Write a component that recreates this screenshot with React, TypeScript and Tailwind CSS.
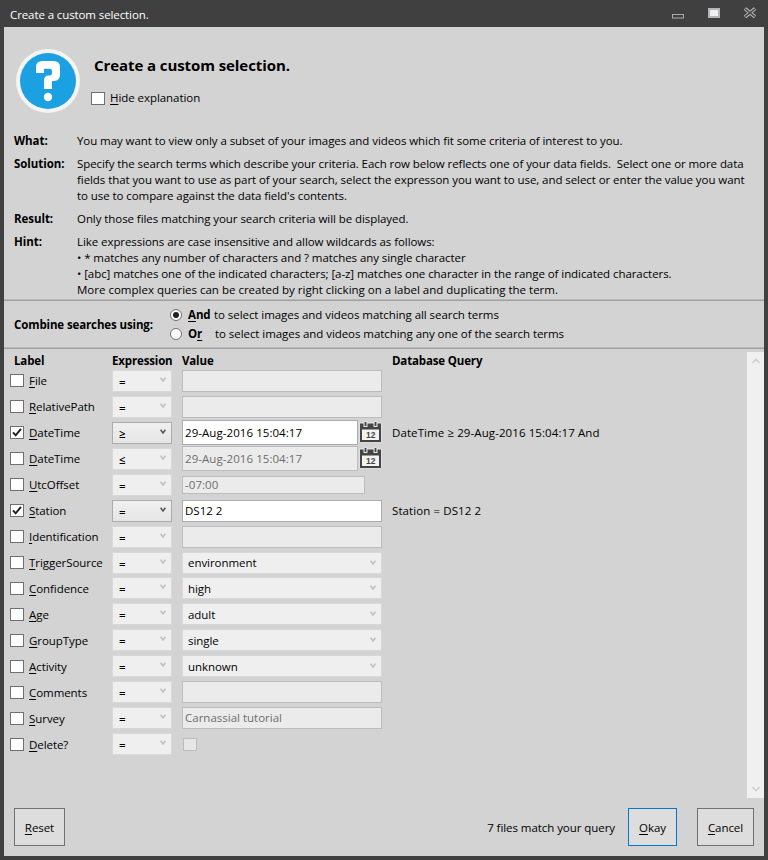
import React from 'react';

type Field = {
  label: string;
  op?: string;
  kind: 'text' | 'combo' | 'date' | 'offset' | 'check';
  value?: string;
  on?: boolean;
  query?: string;
};

const fields: Field[] = [
  { label: 'File', kind: 'text' },
  { label: 'RelativePath', kind: 'text' },
  { label: 'DateTime', op: '≥', kind: 'date', value: '29-Aug-2016 15:04:17', on: true, query: 'DateTime ≥ 29-Aug-2016 15:04:17 And' },
  { label: 'DateTime', op: '≤', kind: 'date', value: '29-Aug-2016 15:04:17' },
  { label: 'UtcOffset', kind: 'offset', value: '-07:00' },
  { label: 'Station', kind: 'text', value: 'DS12 2', on: true, query: 'Station = DS12 2' },
  { label: 'Identification', kind: 'text' },
  { label: 'TriggerSource', kind: 'combo', value: 'environment' },
  { label: 'Confidence', kind: 'combo', value: 'high' },
  { label: 'Age', kind: 'combo', value: 'adult' },
  { label: 'GroupType', kind: 'combo', value: 'single' },
  { label: 'Activity', kind: 'combo', value: 'unknown' },
  { label: 'Comments', kind: 'text' },
  { label: 'Survey', kind: 'text', value: 'Carnassial tutorial' },
  { label: 'Delete?', kind: 'check' },
];

function Access({ text }: { text: string }) {
  return (
    <span className="whitespace-pre">
      <span className="underline decoration-1 underline-offset-2">{text[0]}</span>
      {text.slice(1)}
    </span>
  );
}

function Box({ on }: { on?: boolean }) {
  return (
    <span className="flex h-[13px] w-[14px] shrink-0 border border-[#707070] bg-white">
      {on && (
        <svg viewBox="0 0 12 11" className="h-[11px] w-3">
          <path d="M2 5.3 L4.7 8.3 L10 1.8" fill="none" stroke="#212121" strokeWidth="2" />
        </svg>
      )}
    </span>
  );
}

function Chevron({ color }: { color: string }) {
  return (
    <svg viewBox="0 0 6 6" className="h-1.5 w-1.5 shrink-0">
      <path d="M0.6 0.8 L3 4 L5.4 0.8" fill="none" stroke={color} strokeWidth="1.5" />
    </svg>
  );
}

function Calendar() {
  return (
    <svg viewBox="0 0 23 22" className="mb-0.5 ml-px h-[22px] w-[23px] shrink-0">
      <rect x="0.3" y="1.5" width="22.4" height="20" rx="1" fill="#e6e6e6" />
      <rect x="1" y="2.5" width="21" height="18.5" fill="#444" />
      <rect x="3" y="8.5" width="17" height="10.5" fill="#f2f2f2" />
      <path d="M4.5 0.5h4v5.5h-4zM14.5 0.5h4v5.5h-4z" fill="#e6e6e6" />
      <path d="M6.5 1v4M16.5 1v4" stroke="#444" strokeWidth="1.8" />
      <text x="11.7" y="17" textAnchor="middle" fontSize="8.5" fontWeight="700" fill="#444" fontFamily="Liberation Sans, sans-serif">12</text>
    </svg>
  );
}

function Value({ f }: { f: Field }) {
  const tone = f.on ? 'border-[#abadb3] bg-white text-black' : 'border-[#bcbdbf] bg-[#ebebeb] text-[#6d6d6d]';
  if (f.kind === 'combo')
    return (
      <div className="flex h-[22px] w-[200px] items-center justify-between border border-[#d9d9d9] bg-[#efefef] pl-[5px] pr-[5px]">
        <span className="pt-px">{f.value}</span>
        <Chevron color="#bfbfbf" />
      </div>
    );
  if (f.kind === 'check') return <div className="ml-px h-[13px] w-[14px] border border-[#bcbcbc] bg-[#e6e6e6]" />;
  if (f.kind === 'offset')
    return <div className={`flex h-[18px] w-[183px] items-center border pl-0.5 tracking-[0.05px] ${tone}`}>{f.value}</div>;
  if (f.kind === 'date')
    return (
      <div className="flex items-center">
        <div className={`flex h-[25px] w-[176px] items-center border pl-0.5 tracking-[0.06px] ${tone}`}>{f.value}</div>
        <Calendar />
      </div>
    );
  return <div className={`flex h-[22px] w-[200px] items-center border pl-0.5 tracking-normal ${tone}`}>{f.value}</div>;
}

function Row({ f }: { f: Field }) {
  return (
    <div className="flex h-[25.95px] items-center">
      <div className="flex w-[102px] items-center gap-[5px]">
        <Box on={f.on} />
        <span className="pt-[0.9px]">
          <Access text={f.label} />
        </span>
      </div>
      <div
        className={`mr-2.5 flex h-[22px] w-[60px] items-center justify-between border pl-1.5 pr-[5px] ${
          f.on ? 'border-[#acacac] bg-linear-to-b from-[#f0f0f0] to-[#e5e5e5]' : 'border-[#d9d9d9] bg-[#efefef]'
        }`}
      >
        <span className="pt-0.5 font-semibold">{f.op ?? '='}</span>
        <span className="flex pb-0.5">
          <Chevron color={f.on ? '#555' : '#bfbfbf'} />
        </span>
      </div>
      <div className="w-[210px]">
        <Value f={f} />
      </div>
      <div className="tracking-[0.09px]">{f.query}</div>
    </div>
  );
}

function Explain({ title, children }: { title: string; children: React.ReactNode }) {
  return (
    <div className="mb-[7px] flex whitespace-pre">
      <b className="w-[63px] shrink-0 tracking-[-0.05px]">{title}</b>
      <div className="tracking-[-0.07px]">{children}</div>
    </div>
  );
}

function Radio({ on }: { on?: boolean }) {
  return (
    <span className="flex h-3 w-3 items-center justify-center rounded-full border border-[#707070] bg-white">
      {on && <span className="h-1.5 w-1.5 rounded-full bg-[#212121]" />}
    </span>
  );
}

const Rule = () => <div className="h-0.5 border-b border-[#a0a0a0] bg-[#b8b8b8]" />;

export default function App() {
  return (
    <div className="flex h-[860px] w-[768px] flex-col bg-[#404040] px-1 pb-1 font-['Open_Sans','Noto_Sans',sans-serif] text-[11.5px] leading-4 tracking-[-0.06px] text-black">
      <header className="flex h-[27px] shrink-0 items-center justify-between pl-1.5 pr-2 text-white">
        <span className="pt-[3px] tracking-[-0.1px]">Create a custom selection.</span>
        <svg viewBox="0 0 84 12" className="mb-0.5 h-3 w-[84px]">
          <rect x="0.5" y="7.5" width="11" height="3.5" fill="#404040" stroke="#aaa" />
          <rect x="37" y="2" width="10" height="8" fill="#f0f0f3" stroke="#b5b5b5" strokeWidth="2" />
          <path d="M73 1.5 L83 10 M83 1.5 L73 10" stroke="#c0c0c0" strokeWidth="3.6" />
          <path d="M73.2 1.8 L82.8 9.7 M82.8 1.8 L73.2 9.7" stroke="#484848" strokeWidth="1.6" />
        </svg>
      </header>

      <main className="flex flex-1 flex-col bg-[#d3d3d3]">
        <section className="flex h-[106px] pl-3 pt-[22px]">
          <svg viewBox="0 0 64 64" className="h-16 w-16">
            <circle cx="32" cy="32" r="32" fill="#f4f4f4" />
            <circle cx="32" cy="32" r="28" fill="#1ba1e2" />
            <path d="M20 24 V18 Q20 12 26.5 12 H37.5 Q44 12 44 18 V25.5 Q44 32 38 32 H36 V40 H28 V32 Q28 26.5 32.5 26.5 H33.5 Q36 26.5 36 24 V22 Q36 19.7 33.5 19.7 H28 V24 Z" fill="#fff" />
            <circle cx="32" cy="48" r="4.2" fill="#fff" />
          </svg>
          <div className="ml-[11px] pt-1.5">
            <h1 className="ml-[3px] text-[15px] font-bold leading-5 tracking-[-0.08px]">Create a custom selection.</h1>
            <div className="mt-[15px] flex items-center gap-[5px]">
              <Box />
              <Access text="Hide explanation" />
            </div>
          </div>
        </section>

        <section className="h-[166px] pl-2.5">
          <Explain title="What:">You may want to view only a subset of your images and videos which fit some criteria of interest to you.</Explain>
          <Explain title="Solution:">
            {'Specify the search terms which describe your criteria. Each row below reflects one of your data fields.  Select one or more data\nfields that you want to use as part of your search, select the expresson you want to use, and select or enter the value you want\nto use to compare against the data field\'s contents.'}
          </Explain>
          <Explain title="Result:">Only those files matching your search criteria will be displayed.</Explain>
          <Explain title="Hint:">
            {'Like expressions are case insensitive and allow wildcards as follows:\n• * matches any number of characters and ? matches any single character\n• [abc] matches one of the indicated characters; [a-z] matches one character in the range of indicated characters.\n'}
            <span className="tracking-normal">More complex queries can be created by right clicking on a label and duplicating the term.</span>
          </Explain>
        </section>

        <Rule />
        <section className="flex h-[46px] items-center pl-2.5">
          <b className="w-[156px] pt-0.5 tracking-[-0.12px]">Combine searches using:</b>
          <div className="flex flex-col gap-[3px]">
            <div className="flex items-center">
              <Radio on />
              <b className="ml-1.5 w-[26px]"><Access text="And" /></b>
              <span className="pt-px">to select images and videos matching all search terms</span>
            </div>
            <div className="flex items-center">
              <Radio />
              <b className="ml-1.5 w-[27px]">O<span className="underline decoration-1 underline-offset-2">r</span></b>
              <span>to select images and videos matching any one of the search terms</span>
            </div>
          </div>
        </section>
        <Rule />

        <section className="flex h-[449px] justify-between">
          <div className="flex-1 pl-1.5 pt-1">
            <div className="flex h-[15px] pl-1 font-bold tracking-[-0.15px]">
              <span className="w-[98px]">Label</span>
              <span className="w-[70px]">Expression</span>
              <span className="w-[210px]">Value</span>
              <span>Database Query</span>
            </div>
            {fields.map((f, i) => (
              <Row key={i} f={f} />
            ))}
          </div>
          <div className="mt-[3px] flex w-[17px] flex-col items-center justify-between bg-[#f0f0f0] py-1.5">
            <svg viewBox="0 0 8 6" className="h-1.5 w-2"><path d="M0.5 5 L4 1.5 L7.5 5" fill="none" stroke="#cfcfcf" strokeWidth="1.6" /></svg>
            <svg viewBox="0 0 8 6" className="h-1.5 w-2"><path d="M0.5 1 L4 4.5 L7.5 1" fill="none" stroke="#cfcfcf" strokeWidth="1.6" /></svg>
          </div>
        </section>

        <footer className="flex items-start pl-2.5 pr-2.5 pt-[10px]">
          <button className="h-[38px] w-[51px] border border-[#707070] bg-[#ddd] pt-0.5"><Access text="Reset" /></button>
          <span className="ml-auto mr-[13px] pt-[12px]">7 files match your query</span>
          <button className="h-[38px] w-[49px] border border-[#0078d7] bg-[#ddd] pt-0.5"><Access text="Okay" /></button>
          <button className="ml-5 h-[38px] w-[57px] border border-[#707070] bg-[#ddd] pt-0.5"><Access text="Cancel" /></button>
        </footer>
      </main>
    </div>
  );
}
